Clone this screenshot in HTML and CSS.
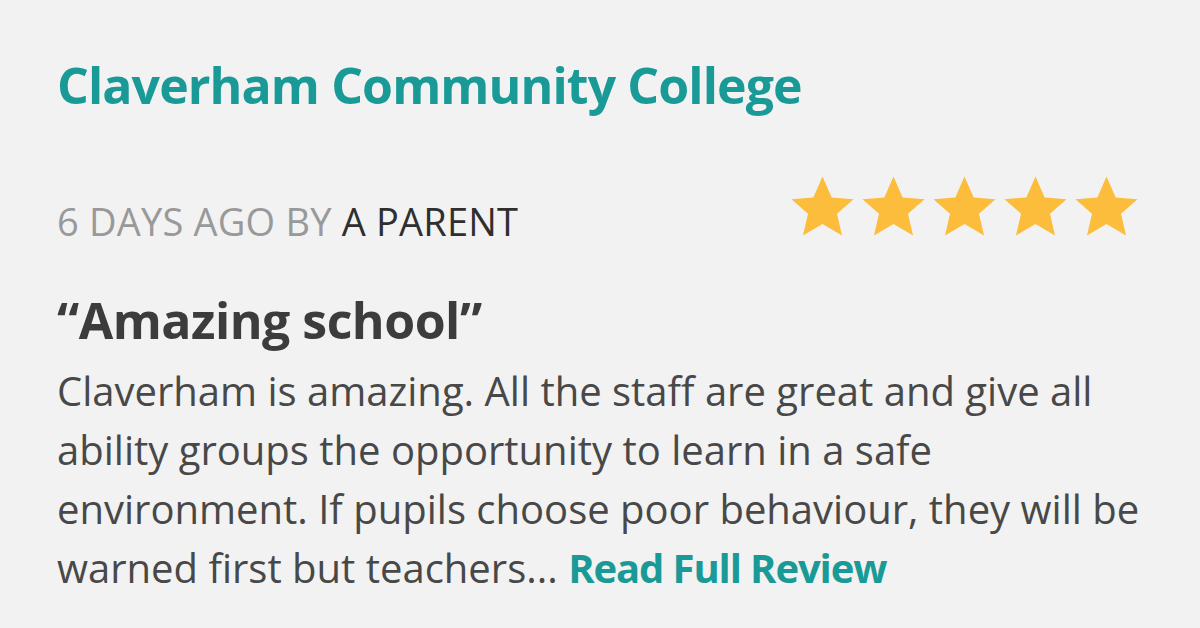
FILE: index.html
```html
<!DOCTYPE html>
<html>
<head>
    <title>Claverham Community College review</title>
    <link rel="stylesheet" href="styles.css">
</head>
<body>
    <div class="review-card">
        <h1 class="school-name">Claverham Community College</h1>

        <div class="review-meta">
            <div class="byline">6 DAYS AGO BY <span class="author">A PARENT</span></div>
            <div class="stars">
                <svg class="star" viewBox="0 0 24 24"><path d="M12 1.5l3.1 7.1 7.4.6-5.6 4.9 1.7 7.4L12 17.6l-6.6 3.9 1.7-7.4-5.6-4.9 7.4-.6z"/></svg>
                <svg class="star" viewBox="0 0 24 24"><path d="M12 1.5l3.1 7.1 7.4.6-5.6 4.9 1.7 7.4L12 17.6l-6.6 3.9 1.7-7.4-5.6-4.9 7.4-.6z"/></svg>
                <svg class="star" viewBox="0 0 24 24"><path d="M12 1.5l3.1 7.1 7.4.6-5.6 4.9 1.7 7.4L12 17.6l-6.6 3.9 1.7-7.4-5.6-4.9 7.4-.6z"/></svg>
                <svg class="star" viewBox="0 0 24 24"><path d="M12 1.5l3.1 7.1 7.4.6-5.6 4.9 1.7 7.4L12 17.6l-6.6 3.9 1.7-7.4-5.6-4.9 7.4-.6z"/></svg>
                <svg class="star" viewBox="0 0 24 24"><path d="M12 1.5l3.1 7.1 7.4.6-5.6 4.9 1.7 7.4L12 17.6l-6.6 3.9 1.7-7.4-5.6-4.9 7.4-.6z"/></svg>
            </div>
        </div>

        <h2 class="review-title">&ldquo;Amazing school&rdquo;</h2>
        <p class="review-body">
            Claverham is amazing. All the staff are great and give all
            ability groups the opportunity to learn in a safe
            environment. If pupils choose poor behaviour, they will be
            warned first but teachers... <a class="read-more" href="#">Read Full Review</a>
        </p>
    </div>
</body>
</html>
```

FILE: styles.css
```css
body {
    margin: 0;
    background-color: #f2f2f2;
    font-family: "Open Sans", Lato, sans-serif;
    color: #444;
}

.review-card {
    width: 1090px;
    padding: 55px 0 0 57px;
}

.school-name {
    margin: 0;
    font-size: 50px;
    font-weight: 700;
    color: #1a9a97;
    line-height: 60px;
    letter-spacing: -0.9px;
}

.review-meta {
    display: flex;
    justify-content: space-between;
    align-items: flex-end;
    margin-top: 57px;
}

.byline {
    font-size: 38px;
    line-height: 44px;
    color: #999;
    letter-spacing: 0.2px;
}

.author {
    color: #2f2f2f;
}

.stars {
    display: flex;
    margin-right: 5px;
}

.star {
    display: block;
    width: 71px;
    height: 71px;
    fill: #fcbd3c;
}

.review-title {
    margin: 47px 0 0;
    font-size: 50px;
    font-weight: 700;
    color: #3c3c3c;
    line-height: 60px;
    letter-spacing: -0.5px;
}

.review-body {
    margin: 11px 0 0;
    font-size: 40px;
    line-height: 59px;
    color: #484848;
}

.read-more {
    color: #1a9a97;
    font-weight: 700;
    letter-spacing: -1.1px;
    text-decoration: none;
}
```
